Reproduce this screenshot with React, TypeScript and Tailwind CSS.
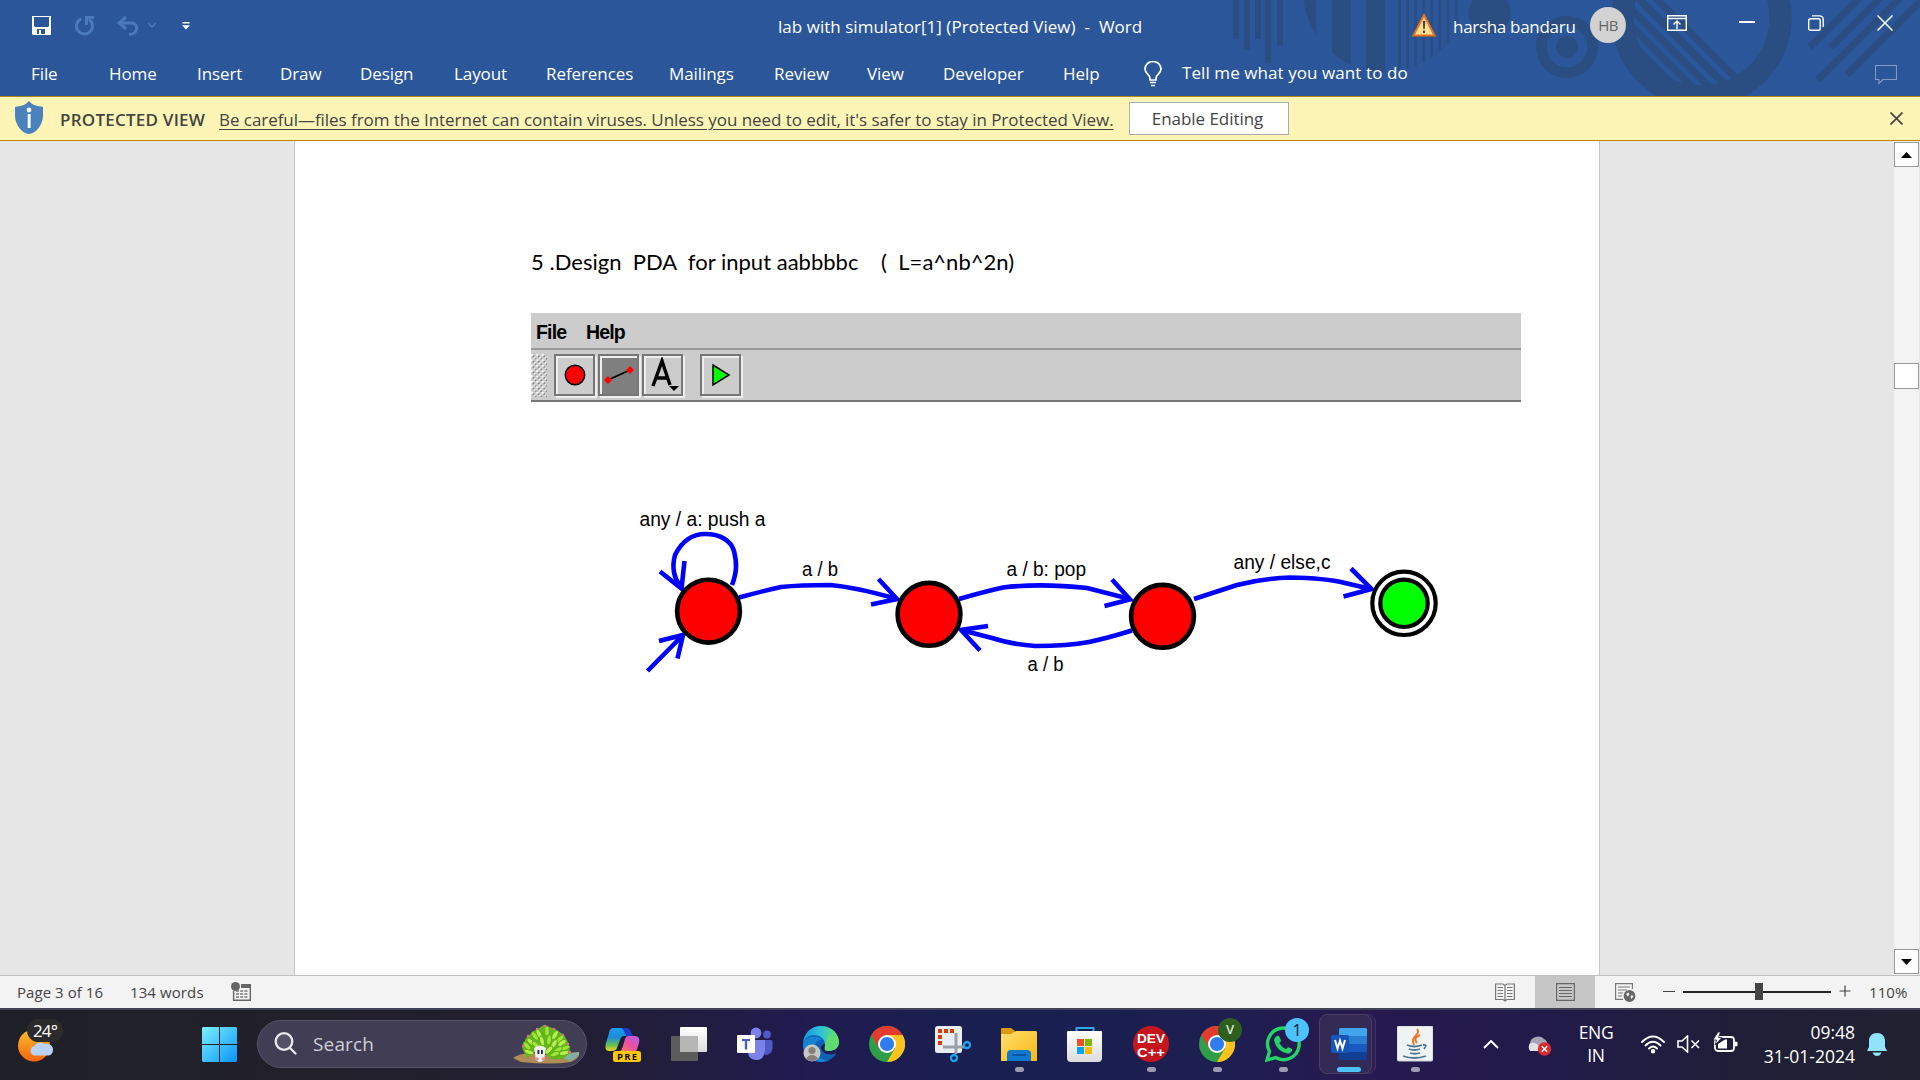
import React from "react";

const ui = "font-['Open_Sans','Noto_Sans',sans-serif]";

function HeaderArt() {
  const d = "#2a4d82";
  return (
    <svg className="absolute right-0 top-0" width="700" height="96" viewBox="1220 0 700 96">
      <defs>
        <clipPath id="disc"><circle cx="1385" cy="-10" r="82" /></clipPath>
        <clipPath id="ringInner"><circle cx="1701.5" cy="17.5" r="69" /></clipPath>
      </defs>
      <g fill={d}>
        <rect x="1233" width="6" height="39" />
        <rect x="1244" width="6" height="50" />
        <rect x="1255" width="6" height="39" />
        <rect x="1265" width="6" height="63" />
        <rect x="1277" width="6" height="46" />
        <g clipPath="url(#disc)">
          <rect x="1300" width="16" height="90" />
          <rect x="1332" width="19" height="90" />
          <rect x="1366" width="19" height="90" />
          {[0, 1, 2, 3, 4, 5, 6, 7].map((i) => (
            <rect key={i} x={1398 + i * 8.1} width="2.8" height="90" />
          ))}
        </g>
        <circle cx="1489.5" cy="13" r="21" />
        <circle cx="1567" cy="47" r="11" />
      </g>
      <g fill="none" stroke={d}>
        <circle cx="1567" cy="47" r="25.7" strokeWidth="10.5" />
        <circle cx="1701.5" cy="17.5" r="79" strokeWidth="22.5" />
        <g strokeWidth="7" clipPath="url(#ringInner)">
          {[1658, 1640, 1622, 1605, 1588].map((x) => (
            <path key={x} d={`M${x - 10} -10L${x + 110} 110`} />
          ))}
        </g>
        <g strokeWidth="7">
          <path d="M1810 47L1870 -13M1831 47L1891 -13M1818 80L1911 -13M1847 75L1935 -13" />
        </g>
      </g>
    </svg>
  );
}

function Header() {
  const tabs: [string, string][] = [
    ["Home", "w-[88px]"],
    ["Insert", "w-[83px]"],
    ["Draw", "w-[80px]"],
    ["Design", "w-[94px]"],
    ["Layout", "w-[92px]"],
    ["References", "w-[123px]"],
    ["Mailings", "w-[105px]"],
    ["Review", "w-[93px]"],
    ["View", "w-[76px]"],
    ["Developer", "w-[120px]"],
    ["Help", "w-[80px]"],
  ];
  return (
    <header className="relative h-[96px] shrink-0 bg-[#2b579a] text-white">
      <HeaderArt />
      <div className="relative flex h-[49px] items-center">
        <div className="flex w-[778px] items-center pl-[31px]">
          <svg width="20" height="20" viewBox="0 0 20 20" className="mt-[1px]">
            <path fillRule="evenodd" fill="#fff" d="M1 1H20V20H2L1 19ZM3 2V11L4 12H17L18 11V2ZM6 14V19H8V15H10V19H14V14Z" />
          </svg>
          <svg width="22" height="20" viewBox="0 0 22 20" className="ml-[23px] mt-[2px]" fill="none" stroke="#4a7ab8" strokeWidth="3">
            <path d="M7 2.8A8 8 0 1 0 15 3.4" />
            <path d="M12.5 9V1.5H20" />
          </svg>
          <svg width="22" height="20" viewBox="0 0 22 20" className="ml-[21px] mt-[2px]" fill="none" stroke="#4a7ab8" strokeWidth="3">
            <path d="M9 1L2 7L9 13M2.5 7H14C22 7 22 18 12 18.5" />
          </svg>
          <svg width="10" height="6" viewBox="0 0 10 6" className="ml-2" fill="none" stroke="#4a7ab8" strokeWidth="1.6"><path d="M1 1L5 5L9 1" /></svg>
          <svg width="8" height="8" viewBox="0 0 8 8" className="ml-[25px] mt-[2px]" fill="#fff"><path d="M0.500 0H7.500V1.500H0.500ZM0 3.300H8L4 7.500Z" /></svg>
        </div>
        <span className="mt-[4px] w-[634px] whitespace-pre text-[17px] tracking-[0.03px]">{"lab with simulator[1] (Protected View)  -  Word"}</span>
        <svg width="24" height="24" viewBox="0 0 24 24" className="mt-[1px]">
          <path d="M12 2L22.500 22.500H1.500Z" fill="#fbdf92" stroke="#e8731c" strokeWidth="2" />
          <path d="M10.800 8H13.300L12.800 16H11.300ZM11 17.500H13V20H11Z" fill="#444" />
        </svg>
        <span className="ml-[17px] mt-[4px] w-[137px] text-[17px] tracking-[-0.3px]">harsha bandaru</span>
        <span className="mt-[1px] flex size-9 items-center justify-center rounded-full bg-[#d2d2d2] text-[15px] tracking-[-0.5px] text-[#666]">HB</span>
        <svg width="20" height="16" viewBox="0 0 20 16" className="ml-[41px] mt-[-3px]" fill="none" stroke="#fff" strokeWidth="1.4">
          <path d="M.7.7H19.300V15.300H.7ZM.7 3.500H19.300M10 14V6.500M6.500 9.500L10 6L13.500 9.500" />
        </svg>
        <span className="ml-[52px] mt-[-5px] h-[2px] w-4 bg-white" />
        <svg width="16" height="16" viewBox="0 0 16 16" className="ml-[53px] mt-[-3px]" fill="none" stroke="#fff" strokeWidth="1.4">
          <rect x=".7" y="3.700" width="11.500" height="11.500" rx="1.800" />
          <path d="M4 .9H11.500Q15.200 1 15.200 4.500V12" />
        </svg>
        <svg width="16" height="16" viewBox="0 0 16 16" className="ml-[53px] mt-[-3px]" stroke="#fff" strokeWidth="1.5"><path d="M.5.5L15.500 15.500M15.500.5L.5 15.500" /></svg>
      </div>
      <nav className="relative flex h-[47px] items-center pt-[2px] text-[17px] tracking-[-0.08px]">
        <span className="w-[109px] pl-[31px]">File</span>
        {tabs.map(([t, w]) => (
          <span key={t} className={w}>{t}</span>
        ))}
        <svg width="20" height="26" viewBox="0 0 20 26" fill="none" stroke="#fff" strokeWidth="1.700" className="mr-[19px]">
          <path d="M7 19V17C7 14 2 12.500 2 8A8 7.500 0 0 1 18 8C18 12.500 13 14 13 17V19ZM7 21.500H13M8 24.500H12" />
        </svg>
        <span className="mt-[-2px] flex-1 tracking-[0.08px]">Tell me what you want to do</span>
        <svg width="22" height="20" viewBox="0 0 22 20" className="mr-[23px] mt-[2px]" fill="none" stroke="#7f9bc6" strokeWidth="1.100"><path d="M.5.5H21.500V14.500H8L4 18.500V14.500H.5Z" /></svg>
      </nav>
    </header>
  );
}

function ProtectedBar() {
  return (
    <div className="flex h-[45px] shrink-0 items-center border-y border-[#b58900] bg-[#fcf5b6] text-[17px] text-[#444]">
      <svg width="28" height="33" viewBox="0 0 28 33" className="ml-[15px] mt-[-2px]">
        <path d="M14 0C17 4 22 5 28 6V15C28 24 20 33 14 33C8 33 0 24 0 15V6C6 5 11 4 14 0Z" fill="#4a82bd" stroke="none" />
        <circle cx="14" cy="9" r="2.400" fill="#fff" />
        <path d="M12.700 13H15.600V27H12.700Z" fill="#fff" />
      </svg>
      <span className="ml-[17px] mt-[2px] w-[159px] whitespace-nowrap font-semibold tracking-[0.23px]">PROTECTED VIEW</span>
      <span className="mt-[2px] w-[910px] whitespace-nowrap tracking-[-0.05px] underline decoration-1 underline-offset-[3px]">
        Be careful—files from the Internet can contain viruses. Unless you need to edit, it's safer to stay in Protected View.
      </span>
      <button className="h-[33px] w-[160px] border border-[#ababab] bg-white pr-[3px] tracking-[-0.05px]">Enable Editing</button>
      <svg width="13" height="13" viewBox="0 0 13 13" className="ml-auto mr-[17px] mt-[-1px]" stroke="#444" strokeWidth="1.700"><path d="M.5.5L12.500 12.500M12.500.5L.5 12.500" /></svg>
    </div>
  );
}

function Tool({ children, active }: { children: React.ReactNode; active?: boolean }) {
  return (
    <span className={`flex h-[42px] w-[41px] items-center justify-center border-2 border-[#777] shadow-[2px_2px_0_#eee,inset_2px_2px_0_#eee] ${active ? "bg-[#7f7f7f]" : "bg-[#ccc]"}`}>
      {children}
    </span>
  );
}

function SimulatorBar() {
  return (
    <div className="mt-[43px] h-[89px] w-[990px] border-b-2 border-[#777] bg-[#ccc] font-['Liberation_Sans',Arial,sans-serif]">
      <div className="flex h-[37px] items-center gap-[19px] border-b-2 border-[#999] pl-[5px] pt-[4px] text-[19.500px] font-bold tracking-[-0.85px] text-black">
        <span className="w-[31px]">File</span>
        <span>Help</span>
      </div>
      <div className="flex h-[50px] items-center">
        <svg width="16" height="43" className="mr-[7px]">
          <defs>
            <pattern id="grip" width="5.400" height="5.400" patternUnits="userSpaceOnUse">
              <path d="M0 0H2V2H0ZM2.700 2.700H4.700V4.700H2.700Z" fill="#fff" />
              <path d="M1.600 1.600H3.200V3.200H1.600ZM4 4H5.400V5.400H4Z" fill="#666" />
            </pattern>
          </defs>
          <rect width="16" height="43" fill="url(#grip)" />
        </svg>
        <Tool>
          <svg width="22" height="22"><circle cx="11" cy="11" r="9.700" fill="red" stroke="#000" strokeWidth="1.500" /></svg>
        </Tool>
        <span className="w-[3px]" />
        <Tool active>
          <svg width="32" height="20" viewBox="0 0 32 20">
            <path d="M5 15L27 5" stroke="#000" strokeWidth="1.800" />
            <path d="M5 11L9 15L5 19L1 15ZM27 1L31 5L27 9L23 5Z" fill="red" />
          </svg>
        </Tool>
        <span className="w-[3px]" />
        <Tool>
          <svg width="34" height="36" viewBox="0 0 34 36">
            <path d="M7 29L16 4L24 28M10 21H21" stroke="#000" strokeWidth="3.400" fill="none" />
            <path d="M23 29H33L28 34Z" />
          </svg>
        </Tool>
        <span className="w-[17px]" />
        <Tool>
          <svg width="20" height="24" viewBox="0 0 20 24"><path d="M2 2L18 12L2 22Z" fill="#0f0" stroke="#000" strokeWidth="1.500" /></svg>
        </Tool>
      </div>
    </div>
  );
}

const labels = [
  { t: "any / a: push a", x: 639.5, y: 525.5, w: 126 },
  { t: "a / b", x: 802, y: 575.5, w: 36 },
  { t: "a / b: pop", x: 1006.5, y: 575.5, w: 79.5 },
  { t: "a / b", x: 1027.5, y: 670.5, w: 36 },
  { t: "any / else,c", x: 1233.5, y: 569, w: 97 },
];

function Automaton() {
  return (
    <svg className="mt-[88px]" width="990" height="200" viewBox="531 490 990 200">
      <g fill="none" stroke="#00f" strokeWidth="4.600">
        <path d="M732 585C737 572 737 563 734 551C731 541 721 534 705 534C693 534 682 541 675 555C672 566 673 577 681 587" />
        <path d="M660 571.500L681.500 588.500L684.500 561" />
        <path d="M647.500 671L683 635M659 641L683 635L677.500 658.500" />
        <path d="M739 597.500Q763 591 781 587Q800 585 830 585Q855 587 897 599" />
        <path d="M878.500 579L897 599L871 604.500" />
        <path d="M959 599Q983 592 1003 587.500Q1040 583 1087 588L1130 599" />
        <path d="M1112 579.500L1130 599.500L1104.500 606" />
        <path d="M1132 630.500Q1108 638 1089 642Q1068 646 1035 646Q1010 644 992 638L961 630" />
        <path d="M988 626L961 630L980 650.500" />
        <path d="M1194 599L1237 585Q1262 578.500 1290 577.500Q1325 578 1345 583L1371 589" />
        <path d="M1351 568.500L1371.500 589L1343.500 596.500" />
      </g>
      <g fill="red" stroke="#000" strokeWidth="4.600">
        <circle cx="708.500" cy="611.200" r="31.400" />
        <circle cx="929" cy="614.300" r="31.400" />
        <circle cx="1162.500" cy="616.300" r="31.400" />
      </g>
      <g stroke="#000" strokeWidth="4.200">
        <circle cx="1404" cy="603.300" r="31.700" fill="#fff" />
        <circle cx="1404" cy="603.300" r="23.700" fill="#0f0" />
      </g>
      <g fontFamily="'Liberation Sans', Arial, sans-serif" fontSize="19.500" fill="#000">
        {labels.map((l, i) => (
          <text key={i} x={l.x} y={l.y} textLength={l.w} lengthAdjust="spacingAndGlyphs">{l.t}</text>
        ))}
      </g>
    </svg>
  );
}

function DocumentArea() {
  return (
    <main className="flex min-h-0 flex-1 bg-[#e6e6e6]">
      <div className="ml-[294px] w-[1306px] border-x border-[#c6c6c6] bg-white pl-[236px] pt-[105px]">
        <p className="h-[24px] whitespace-pre font-[Lato,sans-serif] text-[22px] leading-[32px] tracking-[0.02px] text-black">{"5 .Design  PDA  for input aabbbbc    (  L=a^nb^2n)"}</p>
        <SimulatorBar />
        <Automaton />
      </div>
      <div className="ml-auto mr-[1px] flex w-[25px] flex-col items-center bg-[#f3f3f3]">
        <span className="mt-[1px] flex h-[25px] w-[25px] items-center justify-center border border-[#999] bg-white"><svg width="11" height="6"><path d="M0 6L5.500 0L11 6Z" /></svg></span>
        <span className="mt-[196px] h-[26px] w-[25px] border border-[#999] bg-white" />
        <span className="mb-[1px] mt-auto flex h-[25px] w-[25px] items-center justify-center border border-[#999] bg-white"><svg width="11" height="6"><path d="M0 0L5.500 6L11 0Z" /></svg></span>
      </div>
    </main>
  );
}

function StatusBar() {
  return (
    <div className="flex h-[33px] shrink-0 items-center border-t border-[#c0c0c0] bg-[#f3f3f3] text-[15px] text-[#444]">
      <span className="w-[114px] pl-[17px] tracking-[0.05px]">Page 3 of 16</span>
      <span className="ml-[16px] w-[101px] tracking-[0.1px]">134 words</span>
      <svg width="20" height="19" viewBox="0 0 20 19" className="mt-[-1px]">
        <path d="M10 2H20V6H10Z" fill="#666" />
        <path d="M2.600 9V18.300H19.300V5" fill="none" stroke="#666" strokeWidth="1.400" />
        <circle cx="4.500" cy="4.500" r="4.500" fill="#666" />
        <path d="M5 9H17M5 12H17M5 15H17" stroke="#777" strokeWidth="1.300" strokeDasharray="3 1.200" />
      </svg>
      <div className="ml-auto flex h-full items-center">
        <span className="flex w-[60px] justify-center">
          <svg width="20" height="19" viewBox="0 0 20 19" fill="none" stroke="#777" strokeWidth="1.200">
            <path d="M.6 1H8L10 2.500L12 1H19.400V16.500H12L10 18L8 16.500H.6ZM10 2V18.500M2.500 4.500H8M2.500 7.500H8M2.500 10.500H8M2.500 13.500H8M12 4.500H17.500M12 7.500H17.500M12 10.500H17.500M12 13.500H17.500" />
          </svg>
        </span>
        <span className="flex h-full w-[60px] items-center justify-center bg-[#c6c6c6]">
          <svg width="19" height="18" viewBox="0 0 19 18" fill="none" stroke="#666" strokeWidth="1.200"><path d="M.6.6H18.400V17.400H.6ZM3 4.500H16M3 7.500H16M3 10.500H16M3 13.500H16" /></svg>
        </span>
        <span className="flex w-[60px] justify-center">
          <svg width="21" height="19" viewBox="0 0 21 19" fill="none" stroke="#777" strokeWidth="1.200">
            <path d="M8 16.400H.6V.6H17.400V6M3 4H15M3 7H12M3 10H8M3 13H7" />
            <circle cx="14.500" cy="13" r="5.300" fill="#666" stroke="#666" />
            <path d="M11 11L13.500 9.500L14.500 11.500L12.500 13.500ZM16.500 12L18.500 13L16.500 16L15.500 14Z" fill="#f3f3f3" stroke="none" />
          </svg>
        </span>
        <span className="ml-[8px] mt-[-2px] h-px w-[12px] bg-[#444]" />
        <span className="relative ml-[8px] mt-[-1px] h-[2px] w-[148px] bg-[#262626]">
          <span className="absolute left-[72px] top-[-8px] h-[17px] w-[8px] bg-[#444]" />
        </span>
        <svg width="12" height="12" className="ml-[8px] mt-[-2px]"><path d="M6 .5V11.500M.5 6H11.500" stroke="#444" strokeWidth="1.200" /></svg>
        <span className="ml-[18px] w-[51px] tracking-[0.1px]">110%</span>
      </div>
    </div>
  );
}

function Chrome() {
  return (
    <svg width="36" height="36" viewBox="0 0 36 36">
      <circle cx="18" cy="18" r="18" fill="#2f9e48" />
      <path d="M18 9H33.600A18 18 0 0 1 18 36L26 22.500Z" fill="#fcc31e" />
      <path d="M2.400 9A18 18 0 0 1 33.600 9H18L10.200 22.500Z" fill="#e33b2e" />
      <circle cx="18" cy="18" r="9" fill="#fff" />
      <circle cx="18" cy="18" r="7.100" fill="#2f7cee" />
    </svg>
  );
}

const gradients = (
  <svg width="0" height="0" className="absolute">
    <defs>
      <linearGradient id="gWin" x1="0" y1="0" x2="1" y2="1"><stop stopColor="#7af0ff" /><stop offset="1" stopColor="#0a94f8" /></linearGradient>
      <linearGradient id="gMoon" x1="0" y1="0" x2="0" y2="1"><stop stopColor="#fcc02e" /><stop offset="1" stopColor="#f4650f" /></linearGradient>
      <linearGradient id="gCopA" x1="0" y1="0" x2="0" y2="1"><stop stopColor="#1aa0f0" /><stop offset=".4" stopColor="#1c8ad8" /><stop offset=".75" stopColor="#66c04c" /><stop offset="1" stopColor="#f0d62a" /></linearGradient>
      <linearGradient id="gCopB" x1="1" y1="0" x2="0" y2="1"><stop stopColor="#b35cf5" /><stop offset=".5" stopColor="#ec4f9e" /><stop offset="1" stopColor="#ff9350" /></linearGradient>
      <linearGradient id="gEdge" x1="0" y1="0" x2="1" y2="0"><stop stopColor="#1a94dc" /><stop offset=".5" stopColor="#2fc2d8" /><stop offset="1" stopColor="#6be35a" /></linearGradient>
      <linearGradient id="gFold" x1="0" y1="0" x2="1" y2="1"><stop stopColor="#ffdf6e" /><stop offset="1" stopColor="#f9b716" /></linearGradient>
      <linearGradient id="gGrey" x1="0" y1="0" x2="0" y2="1"><stop stopColor="#fff" /><stop offset="1" stopColor="#dcdcdc" /></linearGradient>
    </defs>
  </svg>
);

function Slot({ children, running }: { children: React.ReactNode; running?: boolean }) {
  return (
    <span className="relative flex h-full w-[66px] shrink-0 items-center justify-center">
      {children}
      {running && <span className="absolute bottom-[6px] h-[5px] w-[9px] rounded-full bg-[#9c9bb2]" />}
    </span>
  );
}

function Taskbar() {
  return (
    <footer className="flex h-[72px] shrink-0 items-center border-t-2 border-[#414256] bg-[linear-gradient(90deg,#1f2127_0%,#221f2c_22%,#211d3a_34%,#201b50_42%,#182051_53%,#1d1f50_62%,#261a50_71%,#211b48_82%,#1f1e38_90%,#212131_100%)] pb-[2px] text-white">
      {gradients}
      <div className="w-[202px] pl-[17px]">
        <svg width="48" height="48" viewBox="0 0 48 48" className="mt-[-5px]">
          <circle cx="17" cy="27.500" r="16" fill="url(#gMoon)" />
          <rect x="10" y="1" width="36" height="23" rx="11.500" fill="#2c2b2c" />
          <path d="M17 37.500A5 5 0 0 1 17 28A7 6 0 0 1 28 26A6 6 0 0 1 32 37.500Z" fill="#b8d2f8" />
          <text x="16" y="18.500" fontSize="17" textLength="25" fill="#fff" fontFamily="'Open Sans',sans-serif">24°</text>
        </svg>
      </div>
      <svg width="35" height="35" viewBox="0 0 35 35"><path fill="url(#gWin)" d="M1 0H17V17H0V1ZM18 0H34L35 1V17H18ZM0 18H17V35H1L0 34ZM18 18H35V34L34 35H18Z" /></svg>
      <div className="ml-[20px] flex h-[48px] w-[330px] items-center rounded-full border border-[#56546a] bg-[#403d54]">
        <svg width="24" height="24" viewBox="0 0 24 24" className="ml-[16px]" fill="#555267" stroke="#e8e8ee" strokeWidth="2.300" strokeLinecap="round"><circle cx="10" cy="9.500" r="8.300" /><path d="M16 16L21.500 21.500" /></svg>
        <span className="ml-[15px] text-[19px] tracking-[0.15px] text-[#d0cfd8]">Search</span>
        <svg width="70" height="40" viewBox="0 0 70 40" className="ml-auto mr-[5px]">
          <path d="M2 34Q12 27 30 31L68 28Q70 33 60 38Q40 41 10 38Z" fill="#b08c56" />
          <path d="M46 32L68 28Q68 33 60 37Z" fill="#85b0a4" />
          <path d="M16 34L11 24L15 14L23 7L33 1L44 5L53 11L58 20L59 29L52 35H40L28 24Z" fill="#63b61c" />
          {[[18, 28, 20], [16, 22, 50], [20, 18, 40], [24, 12, 55], [28, 10, 65], [36, 7, 90], [44, 11, 120], [49, 15, 135], [51, 19, 145], [54, 24, 160], [53, 29, 170], [25, 21, 45], [31, 17, 75], [38, 16, 95], [43, 20, 120], [47, 26, 150], [38, 26, 130], [44, 30, 160]].map(([x, y, r], i) => (
            <ellipse key={i} cx={x} cy={y} rx="5" ry="2.300" transform={`rotate(${r} ${x} ${y})`} fill={i % 2 ? "#9be636" : "#b6f04d"} stroke="#58a51a" strokeWidth=".8" />
          ))}
          {[[12, 22], [17, 12], [26, 5], [34, 2], [43, 5], [52, 11], [57, 20], [59, 28]].map(([x, y], i) => (
            <circle key={i} cx={x} cy={y} r="1.200" fill="#e86a9a" />
          ))}
          <path d="M23 24Q29 19 35 24L33 36Q29 40 25 36Z" fill="#eeeeea" />
          <path d="M26.500 26H28.300V30H26.500ZM30 26H31.800V30H30Z" fill="#1b2350" />
          <circle cx="26" cy="35" r="1.800" fill="#e98c9a" /><circle cx="32.500" cy="35" r="1.800" fill="#e98c9a" />
        </svg>
      </div>
      <div className="ml-[3px] flex h-full w-[860px] items-center">
        <Slot>
          <svg width="36" height="36" viewBox="0 0 36 36">
            <path d="M9 2H19C23 2 24 3 26 10H19C17 10 16 11 15 14L12 22C11 25 8 25 4 25C0 25 0 21 1 17L4 7C5 3 6 2 9 2Z" fill="url(#gCopA)" />
            <path d="M16 2H21C25 2 26 5 28 10H22C20 10 20 4 16 2Z" fill="#1a3ec8" />
            <path d="M23 10H30C34 10 35 13 34 17L31 26H12C16 26 17 23 18 20L20 13Q21 10 23 10Z" fill="url(#gCopB)" />
            <rect x="8" y="25" width="28" height="11" rx="2.500" fill="#ffc80a" />
            <text x="12" y="34" fontSize="9.500" fontWeight="700" textLength="20" fill="#111" fontFamily="'Open Sans',sans-serif">PRE</text>
          </svg>
        </Slot>
        <Slot>
          <svg width="36" height="34" viewBox="0 0 36 34">
            <rect x="9" width="27" height="25" rx="1" fill="url(#gGrey)" />
            <rect y="9" width="27" height="25" rx="1" fill="#5c5c5c" />
            <rect x="9" y="9" width="18" height="16" fill="#b5b5b5" />
          </svg>
        </Slot>
        <Slot>
          <svg width="36" height="34" viewBox="0 0 36 34">
            <circle cx="30" cy="7.500" r="3.900" fill="#5059c9" />
            <circle cx="19" cy="6" r="5.400" fill="#7b83eb" />
            <path d="M25 13H34Q35.500 13 35.500 15V22Q34 28 28 28Z" fill="#5059c9" />
            <path d="M11 13H28V24Q27 33 19.500 33Q12 33 11 26Z" fill="#7b83eb" />
            <rect y="8" width="18" height="18" rx="1" fill="#fff" />
            <path d="M5 12H13V14H10.200V22.500H7.800V14H5Z" fill="#5059c9" />
          </svg>
        </Slot>
        <Slot>
          <svg width="36" height="36" viewBox="0 0 36 36">
            <circle cx="18" cy="18" r="18" fill="#0d62b5" />
            <path d="M0 17C1 7 8 0 18 0C29 0 36 8 36 16C36 23 30 25 25 25C19 25 22 22 22 18C22 13 17 9 11 9C6 9 2 12 0 17Z" fill="url(#gEdge)" />
            <path d="M0 17C3 10 14 8 20 14C14 13 11 18 12 24C14 31 20 35 26 34A18 18 0 0 1 0 17Z" fill="#1583d2" />
            <path d="M18 22C19 28 28 30 34 27L36 24V16C36 23 30 25 25 25C20 25 22 22 22 18C19 18 18 20 18 22Z" fill="#1e1c53" />
            <path d="M36 16C36 23 30 25 25 25C21 25 22 22 22 18L26 8Z" fill="#5fdc70" />
            <circle cx="9" cy="27" r="8.500" fill="#c9c7c3" />
            <circle cx="9" cy="24.500" r="3.600" fill="#858079" />
            <path d="M3 33Q5 29 9 29Q13 29 15 33Q9 37 3 33Z" fill="#858079" />
          </svg>
        </Slot>
        <Slot><Chrome /></Slot>
        <Slot>
          <svg width="36" height="36" viewBox="0 0 36 36">
            <rect width="27" height="27" rx="2.500" fill="#e9eef3" />
            <g fill="#d83b01"><path d="M3 3H7V7H3ZM9 3H13V7H9ZM15 3H19V7H15ZM3 9H7V13H3ZM3 15H7V19H3Z" /></g>
            <path d="M21 7V28M8 21H30" stroke="#9aa0a6" strokeWidth="3" />
            <circle cx="19" cy="32" r="3" fill="none" stroke="#1aa3ee" strokeWidth="2.300" />
            <circle cx="32" cy="19" r="3" fill="none" stroke="#1aa3ee" strokeWidth="2.300" />
          </svg>
        </Slot>
        <Slot running>
          <svg width="36" height="33" viewBox="0 0 36 33" className="mt-[1px]">
            <path d="M0 1Q0 0 1 0H10L14 3L12 8H0Z" fill="#dd9a0c" />
            <path d="M0 6H10L15 3H35L36 4V33H0Z" fill="url(#gFold)" />
            <path d="M6 33V26Q6 22 10 22H26Q30 22 30 26V33Z" fill="#1178cf" />
            <path d="M11 27H25" stroke="#0b4f92" strokeWidth="1.700" />
          </svg>
        </Slot>
        <Slot>
          <svg width="36" height="36" viewBox="0 0 36 36">
            <path d="M9.500 7V2H26.500V7" fill="none" stroke="#2ca8ea" strokeWidth="2" />
            <path d="M0 6Q0 5 1 5H34Q35 5 35 6V32Q35 36 31 36H4Q0 36 0 32Z" fill="url(#gGrey)" />
            <path d="M10 13H17V20H10Z" fill="#f25022" /><path d="M18 13H25V20H18Z" fill="#7fba00" />
            <path d="M10 21H17V28H10Z" fill="#00a4ef" /><path d="M18 21H25V28H18Z" fill="#ffb900" />
          </svg>
        </Slot>
        <Slot running>
          <svg width="36" height="36" viewBox="0 0 36 36">
            <circle cx="18" cy="18" r="18" fill="#c4161c" />
            <g fill="#fff" fontFamily="'Liberation Sans',sans-serif" fontWeight="700" fontSize="12">
              <text x="4" y="17" textLength="28" lengthAdjust="spacingAndGlyphs">DEV</text>
              <text x="4" y="30.500" textLength="28" lengthAdjust="spacingAndGlyphs">C++</text>
            </g>
          </svg>
        </Slot>
        <Slot running>
          <Chrome />
          <span className="absolute left-[34px] top-[8px] flex size-6 items-center justify-center rounded-full bg-[#2e5f1e] text-[13px] font-semibold text-[#dfe8d8]">V</span>
        </Slot>
        <Slot running>
          <svg width="36" height="36" viewBox="0 0 36 36">
            <path d="M2 34L4.500 25.500A15.800 15.800 0 1 1 10.500 31.600Z" fill="none" stroke="#25d366" strokeWidth="3.400" />
            <path d="M12 10C13 9.500 14 10 14.500 11L16 14.500C16 16 14 16.500 14.500 17.500Q17 21.500 20.500 23C21.500 23.300 22.500 21 23.500 21.200L27 23C28 24 26 28 22.500 27.500Q11 25 9 14Q9.500 11 12 10Z" fill="#25d366" />
          </svg>
          <span className="absolute left-[35px] top-[8px] flex size-6 items-center justify-center rounded-full bg-[#4cc2ff] text-[16px] text-[#10202c]">1</span>
        </Slot>
        <span className="relative flex h-full w-[66px] shrink-0 items-center justify-center">
          <span className="absolute left-[14px] top-[4px] h-[60px] w-[46px] rounded-lg border border-[#403561] bg-[#2c2052]" />
          <span className="absolute left-[3px] top-[4px] h-[60px] w-[53px] rounded-lg border border-[#4a3e66] bg-[#342a56]" />
          <svg width="36" height="32" viewBox="0 0 36 32" className="relative">
            <path d="M9 0H35L36 1V8H8V1Z" fill="#41a5ee" /><path d="M8 8H36V16H8Z" fill="#2b7cd3" />
            <path d="M8 16H36V24H8Z" fill="#185abd" /><path d="M8 24H36V31L35 32H9L8 31Z" fill="#103f91" />
            <rect y="7" width="18" height="18" rx="1.500" fill="#1756b8" />
            <path d="M4 12L6.500 20.500L9 12.500L11.500 20.500L14 12" fill="none" stroke="#fff" strokeWidth="2" />
          </svg>
          <span className="absolute bottom-[6px] h-[5px] w-6 rounded-full bg-[#4cc2ff]" />
        </span>
        <Slot running>
          <svg width="36" height="36" viewBox="0 0 36 36">
            <rect width="36" height="35" rx="2" fill="#f1f2f2" stroke="#c6d0d4" />
            <path d="M20 3C25 8 12 11 17 19M23 9C18 11 17 14 20 17" fill="none" stroke="#e8762c" strokeWidth="2" />
            <path d="M10 19Q17 22 25 19M12 23Q17 25 23 23M13 27Q17 28.500 23 27M26 19Q31 18 27 23M6 30Q17 34 29 30" fill="none" stroke="#4e7896" strokeWidth="1.800" />
          </svg>
        </Slot>
      </div>
      <div className="ml-auto flex items-center">
        <svg width="16" height="9" viewBox="0 0 16 9" fill="none" stroke="#fff" strokeWidth="2"><path d="M1 8L8 1L15 8" /></svg>
        <svg width="24" height="22" viewBox="0 0 24 22" className="ml-[28px] mt-[3px]">
          <path d="M4 16A4 5 0 0 1 3 8A8 7 0 0 1 17 4Q22 6 20 16Z" fill="#a5a4b5" />
          <path d="M3 16A4 5 0 0 1 4 8Q10 6 14 15L12 16Z" fill="#e1e1e8" />
          <circle cx="17.500" cy="14" r="6.700" fill="#dc2a32" />
          <path d="M14.800 11.300L20.200 16.700M20.200 11.300L14.800 16.700" stroke="#fff" strokeWidth="1.500" />
        </svg>
        <div className="ml-[22px] w-[46px] text-center text-[17.500px] leading-[23px] tracking-[-0.3px]">ENG<br />IN</div>
        <svg width="24" height="19" viewBox="0 0 24 19" className="ml-[22px]" fill="none" stroke="#fff" strokeWidth="1.900" strokeLinecap="round">
          <path d="M1 7Q12 -4 23 7M4.500 10.500Q12 3 19.500 10.500M8 13.500Q12 9.500 16 13.500" /><circle cx="12" cy="16.300" r="1.300" fill="#fff" />
        </svg>
        <svg width="24" height="18" viewBox="0 0 24 18" className="ml-[12px]" fill="none" stroke="#fff" strokeWidth="1.600"><path d="M1 6H5L10.500 1V17L5 12H1ZM14.500 5.500L22 13M22 5.500L14.500 13" /></svg>
        <svg width="25" height="21" viewBox="0 0 25 21" className="ml-[12px] mt-[-3px]">
          <rect x="2" y="5" width="19" height="14" rx="3" fill="none" stroke="#fff" strokeWidth="1.800" />
          <path d="M5 16V12L12 7.500H14V16.500H5.500ZM22 9.500L24.500 10V14L22 14.500Z" fill="#fff" />
          <path d="M5 0L0 8H3.500L2 13L9 5.500H5.500L7.500 0Z" fill="#fff" stroke="#1f1c3c" strokeWidth=".8" />
        </svg>
        <div className="ml-[14px] w-[103px] text-right text-[17.500px] leading-[24px]">09:48<br />31-01-2024</div>
        <svg width="20" height="24" viewBox="0 0 20 24" className="ml-[12px] mr-[33px] mt-[2px]" fill="#8fe4fb"><path d="M10 0C15 0 18 3.500 18 8V14L20 18H0L2 14V8C2 3.500 5 0 10 0ZM5.500 19.500H14.500Q13 23 10 23Q7 23 5.500 19.500Z" /></svg>
      </div>
    </footer>
  );
}

export default function App() {
  return (
    <div className={`flex h-[1080px] w-[1920px] flex-col overflow-hidden ${ui}`}>
      <Header />
      <ProtectedBar />
      <DocumentArea />
      <StatusBar />
      <Taskbar />
    </div>
  );
}
